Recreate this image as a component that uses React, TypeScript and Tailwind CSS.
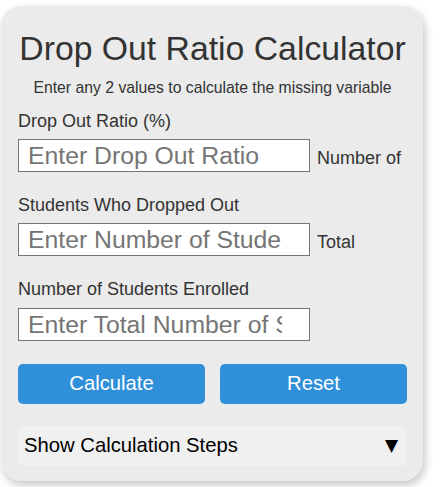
import React from 'react';

const fields = [
  { label: 'Drop Out Ratio (%)', placeholder: 'Enter Drop Out Ratio', after: 'Number of' },
  { label: 'Students Who Dropped Out', placeholder: 'Enter Number of Students Who Dropped Out', after: 'Total' },
  { label: 'Number of Students Enrolled', placeholder: 'Enter Total Number of Students Enrolled', after: '' },
];

export default function App() {
  return (
    <div className="bg-white min-h-[487px] pt-[6px] pl-[1px] font-['Liberation_Sans',Arial,sans-serif]">
      <div className="w-[422px] rounded-[20px] bg-[#ebebeb] pt-[23px] pb-[15px] pl-[17px] pr-[16px] shadow-[2px_4px_8px_rgba(0,0,0,0.22)]">
        {/* Header */}
        <h1 className="text-center text-[33.75px] leading-[39px] text-[#333]">Drop Out Ratio Calculator</h1>
        <p className="mt-[11px] text-center text-[15.75px] leading-[18px] text-[#333]">
          Enter any 2 values to calculate the missing variable
        </p>

        {/* Inputs */}
        {fields.map((f, i) => (
          <div key={i} className={i === 0 ? 'mt-[14px]' : 'mt-[23px]'}>
            <label className="block text-[18px] leading-[21px] text-[#333]">{f.label}</label>
            <div className="mt-[7.2px] flex items-baseline gap-[7px]">
              <input
                type="text"
                placeholder={f.placeholder}
                className="h-[33px] w-[292px] border border-[#767676] bg-white pl-[9px] pr-[27px] text-[24.75px] text-[#333] placeholder:text-[#757575] outline-none"
              />
              {f.after && <span className="text-[18px] leading-[21px] text-[#333]">{f.after}</span>}
            </div>
          </div>
        ))}

        {/* Actions */}
        <div className="mt-[23px] grid grid-cols-2 gap-[15px]">
          <button className="h-[40px] rounded-[5px] bg-[#2f90d9] text-[20.25px] text-white">Calculate</button>
          <button className="h-[40px] rounded-[5px] bg-[#2f90d9] text-[20.25px] text-white">Reset</button>
        </div>

        <div className="mt-[22px] flex h-[40px] items-center justify-between rounded-[5px] bg-[#f0f0f0] pl-[6px] pr-[9px] text-[20.25px] text-black">
          <span>Show Calculation Steps</span>
          <span className="font-['DejaVu_Sans',sans-serif] text-[17px] leading-none">▼</span>
        </div>
      </div>
    </div>
  );
}
